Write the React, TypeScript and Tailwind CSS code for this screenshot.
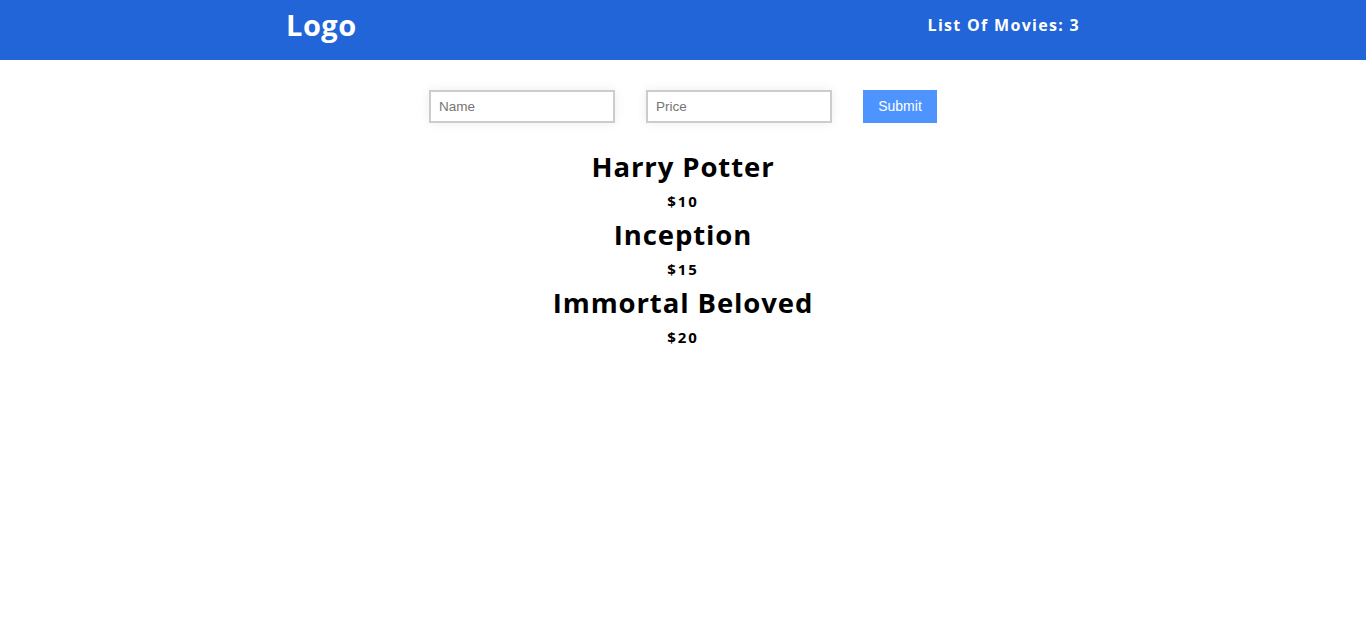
import React, { useState } from 'react';

type Movie = { name: string; price: number };

const initialMovies: Movie[] = [
  { name: 'Harry Potter', price: 10 },
  { name: 'Inception', price: 15 },
  { name: 'Immortal Beloved', price: 20 },
];

const App: React.FC = () => {
  const [movies, setMovies] = useState<Movie[]>(initialMovies);
  const [name, setName] = useState('');
  const [price, setPrice] = useState('');

  const handleSubmit = (e: React.FormEvent) => {
    e.preventDefault();
    if (!name || !price) return;
    setMovies([...movies, { name, price: Number(price) }]);
    setName('');
    setPrice('');
  };

  return (
    <div className="min-h-screen bg-white font-['Open_Sans',sans-serif]">
      <nav className="h-[60px] bg-[#2165d8] text-white">
        <div className="mx-auto flex h-full w-[794px] items-center justify-between pb-[10px]">
          <h1 className="text-[29px] font-bold tracking-[0.5px]">Logo</h1>
          <h3 className="text-[16px] font-bold tracking-[1.3px]">List Of Movies: {movies.length}</h3>
        </div>
      </nav>

      <form onSubmit={handleSubmit} className="mt-[30px] flex items-center justify-center gap-[31px] font-['Liberation_Sans',Arial,sans-serif]">
        <input
          type="text"
          placeholder="Name"
          value={name}
          onChange={(e) => setName(e.target.value)}
          className="h-[33px] w-[186px] border-2 border-[#cccccc] px-2 text-[13.5px] shadow-[0_0_10px_rgba(0,0,0,0.08)] outline-none placeholder:text-[#757575]"
        />
        <input
          type="text"
          placeholder="Price"
          value={price}
          onChange={(e) => setPrice(e.target.value)}
          className="h-[33px] w-[186px] border-2 border-[#cccccc] px-2 text-[13.5px] shadow-[0_0_10px_rgba(0,0,0,0.08)] outline-none placeholder:text-[#757575]"
        />
        <button type="submit" className="h-[33px] w-[74px] bg-[#4d94ff] text-[14px] text-white">
          Submit
        </button>
      </form>

      <div className="mt-[24px] flex flex-col items-center text-black">
        {movies.map((m) => (
          <div key={m.name} className="flex flex-col items-center">
            <h2 className="text-[27.5px] leading-[40px] font-bold tracking-[0.9px]">{m.name}</h2>
            <p className="text-[15px] leading-[28px] font-bold tracking-[2px]">${m.price}</p>
          </div>
        ))}
      </div>
    </div>
  );
};

export default App;
